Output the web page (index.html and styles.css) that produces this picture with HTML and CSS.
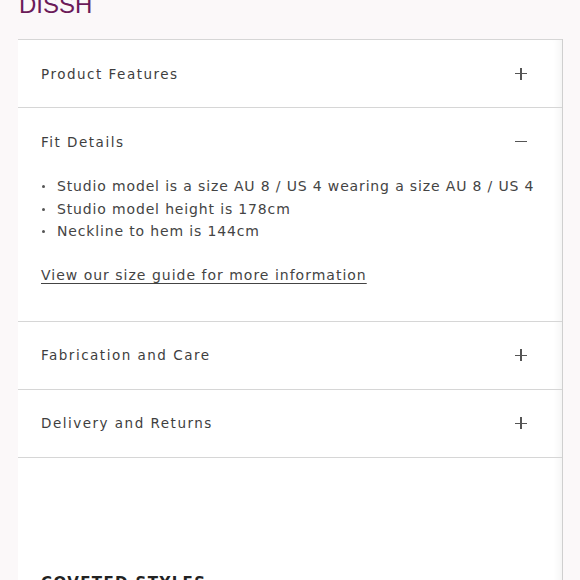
FILE: index.html
```html
<!DOCTYPE html>
<html>
<head>
<meta charset="utf-8">
<link rel="stylesheet" href="styles.css">
</head>
<body>
<div class="brand">DISSH</div>
<div class="panel">
  <div class="acc">
    <div class="item">
      <div class="head"><span class="title">Product Features</span><span class="icon plus"></span></div>
    </div>
    <div class="item open">
      <div class="head"><span class="title">Fit Details</span><span class="icon minus"></span></div>
      <div class="body">
        <ul class="list">
          <li>Studio model is a size AU 8 / US 4 wearing a size AU 8 / US 4</li>
          <li>Studio model height is 178cm</li>
          <li>Neckline to hem is 144cm</li>
        </ul>
        <a class="link" href="#">View our size guide for more information</a>
      </div>
    </div>
    <div class="item">
      <div class="head"><span class="title">Fabrication and Care</span><span class="icon plus"></span></div>
    </div>
    <div class="item">
      <div class="head"><span class="title">Delivery and Returns</span><span class="icon plus"></span></div>
    </div>
  </div>
  <div class="coveted">COVETED STYLES</div>
</div>
</body>
</html>
```
FILE: styles.css
```css
html, body {
  margin: 0;
  padding: 0;
  height: 580px;
  overflow: hidden;
  background: #fbf8f9;
}
body {
  font-family: "DejaVu Sans", sans-serif;
  color: #444;
}
.brand {
  font-family: "Liberation Sans", Arial, sans-serif;
  font-size: 24px;
  line-height: 24px;
  color: #6b1b59;
  margin: -7px 0 0 19px;
  height: 19px;
}
.panel {
  margin: 27px 0 0 18px;
  width: 544px;
  height: 600px;
  background: #ffffff;
  border-right: 1px solid #cfcfcf;
  box-shadow: inset -8px 0 8px -6px rgba(0,0,0,0.06);
}
.acc {
  border-bottom: 1px solid #d6d6d6;
}
.item {
  border-top: 1px solid #d6d6d6;
}
.head {
  height: 67px;
  display: flex;
  align-items: center;
  justify-content: space-between;
  padding: 0 35px 0 23px;
}
.title {
  font-size: 13.5px;
  letter-spacing: 1.5px;
  color: #3e3e3e;
}
.icon {
  position: relative;
  width: 12px;
  height: 12px;
}
.icon::before, .plus::after {
  content: "";
  position: absolute;
  background: #555;
}
.icon::before {
  left: 0;
  top: 5.5px;
  width: 12px;
  height: 1.2px;
}
.plus::after {
  left: 5.4px;
  top: 0;
  width: 1.2px;
  height: 12px;
}
.body {
  padding: 0 23px 35px 23px;
}
.list {
  list-style: none;
  margin: 0;
  padding: 0;
}
.list li {
  font-size: 14px;
  line-height: 22.5px;
  letter-spacing: 0.85px;
  color: #444;
  padding-left: 16px;
  position: relative;
}
.list li::before {
  content: "";
  position: absolute;
  left: 1px;
  top: 10px;
  width: 3px;
  height: 3px;
  border-radius: 50%;
  background: #555;
}
.link {
  display: inline-block;
  margin-top: 21px;
  font-size: 14px;
  line-height: 22px;
  letter-spacing: 1px;
  color: #444;
  text-decoration: underline;
  text-underline-offset: 3px;
  text-decoration-thickness: 1px;
}
.coveted {
  margin: 116px 0 0 23px;
  font-size: 15px;
  font-weight: bold;
  letter-spacing: 1.4px;
  color: #222;
}
```
